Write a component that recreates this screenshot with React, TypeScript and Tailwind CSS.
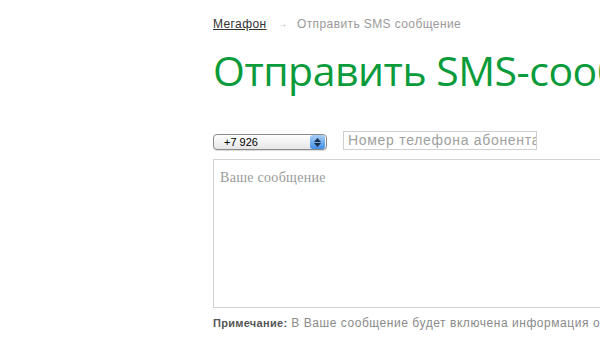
export default function App() {
  return (
    <div className="w-[600px] h-[340px] overflow-hidden bg-white">
      <div className="w-[760px] pl-[213px] pt-[16px]">

        {/* BREADCRUMB */}
        <div className="flex items-center text-[12px] leading-[16px] tracking-[0.4px] font-['Liberation_Sans',Arial,sans-serif]">
          <a className="text-[#333] underline">Мегафон</a>
          <span className="ml-[11px] text-[#b0b0b0] text-[10px]">→</span>
          <span className="ml-[9px] text-[#9a9a9a]">Отправить SMS сообщение</span>
        </div>

        {/* TITLE */}
        <h1 className="mt-[13px] text-[#0a9b3b] text-[41px] leading-[50px] whitespace-nowrap font-['Open_Sans',sans-serif] tracking-[-0.5px]">
          Отправить SMS-сообщение
        </h1>

        {/* PHONE */}
        <div className="mt-[36px] flex items-center gap-[16px]">
          <div className="w-[114px] h-[16px] mt-[3px] flex items-center justify-between border border-[#8a8a8a] rounded-[4px] bg-gradient-to-b from-white to-[#e6e6e6] shadow-[0_1px_1px_rgba(0,0,0,0.15)]">
            <span className="pl-[10px] text-[11px] font-['Liberation_Sans',Arial,sans-serif] text-black">+7 926</span>
            <span className="w-[15px] h-[14px] mr-[1px] rounded-[3px] bg-gradient-to-b from-[#a9cff5] to-[#3d8ee6] flex flex-col items-center justify-center gap-[1px]">
              <svg width="7" height="4" viewBox="0 0 7 4"><path d="M0 4 L3.5 0 L7 4 Z" fill="#1b2f4a" /></svg>
              <svg width="7" height="4" viewBox="0 0 7 4"><path d="M0 0 L3.5 4 L7 0 Z" fill="#1b2f4a" /></svg>
            </span>
          </div>
          <div className="w-[194px] h-[19px] border border-[#cfcfcf] flex items-center pl-[4px] overflow-hidden">
            <span className="text-[14px] tracking-[0.7px] text-[#a0a0a0] whitespace-nowrap font-['Liberation_Sans',Arial,sans-serif]">Номер телефона абонента</span>
          </div>
        </div>

        {/* MESSAGE */}
        <div className="mt-[9px] w-[520px] h-[149px] border border-[#d2d2d2] pl-[6px] pt-[4px]">
          <span className="text-[14px] tracking-[0.3px] text-[#9a9a9a] font-['Liberation_Serif','Times_New_Roman',serif]">Ваше сообщение</span>
        </div>

        {/* NOTE */}
        <p className="mt-[6px] text-[12px] tracking-[0.55px] whitespace-nowrap text-[#8a8a8a] font-['Liberation_Sans',Arial,sans-serif]">
          <b className="text-[#555] text-[11px] tracking-[0.3px]">Примечание:</b> В Ваше сообщение будет включена информация о номере отправителя
        </p>

      </div>
    </div>
  );
}
